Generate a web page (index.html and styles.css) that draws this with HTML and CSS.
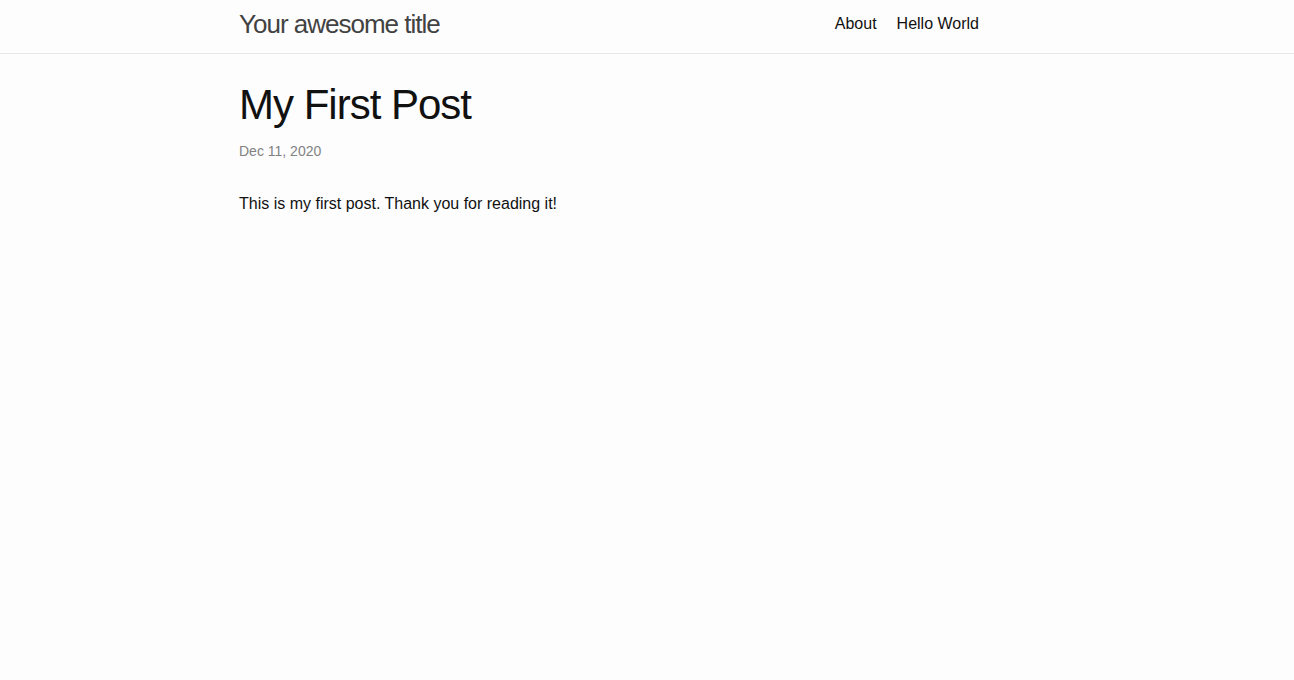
FILE: index.html
```html
<!DOCTYPE html>
<html lang="en">
<head>
<meta charset="utf-8">
<title>My First Post | Your awesome title</title>
<link rel="stylesheet" href="styles.css">
</head>
<body>
<header class="site-header">
  <div class="wrapper header-inner">
    <a class="site-title" href="#">Your awesome title</a>
    <nav class="site-nav">
      <a class="page-link" href="#">About</a>
      <a class="page-link" href="#">Hello World</a>
    </nav>
  </div>
</header>
<main class="page-content">
  <div class="wrapper">
    <article class="post">
      <header class="post-header">
        <h1 class="post-title">My First Post</h1>
        <p class="post-meta">Dec 11, 2020</p>
      </header>
      <div class="post-content">
        <p>This is my first post. Thank you for reading it!</p>
      </div>
    </article>
  </div>
</main>
</body>
</html>
```

FILE: styles.css
```css
html, body {
  margin: 0;
  padding: 0;
}
body {
  background: #fdfdfd;
  color: #111;
  font-family: "Liberation Sans", Arial, Helvetica, sans-serif;
  font-size: 16px;
  line-height: 1.5;
}
a {
  text-decoration: none;
}
.wrapper {
  max-width: 740px;
  padding: 0 30px;
  margin-left: 209px;
}
.site-header {
  height: 53px;
  border-bottom: 1px solid #e8e8e8;
}
.header-inner {
  display: flex;
  justify-content: space-between;
  align-items: flex-start;
}
.site-title {
  font-size: 26px;
  font-weight: 300;
  letter-spacing: -1px;
  line-height: 48px;
  color: #424242;
}
.site-nav {
  display: flex;
  gap: 20px;
  line-height: 47px;
}
.page-link {
  color: #111;
}
.page-content {
  padding: 30px 0;
}
.post-header {
  margin-bottom: 30px;
}
.post-title {
  font-size: 42px;
  font-weight: 400;
  letter-spacing: -1px;
  line-height: 1;
  margin: 0 0 15px;
}
.post-meta {
  font-size: 14px;
  color: #828282;
  margin: 0;
}
.post-content p {
  margin: 0 0 15px;
}
```
